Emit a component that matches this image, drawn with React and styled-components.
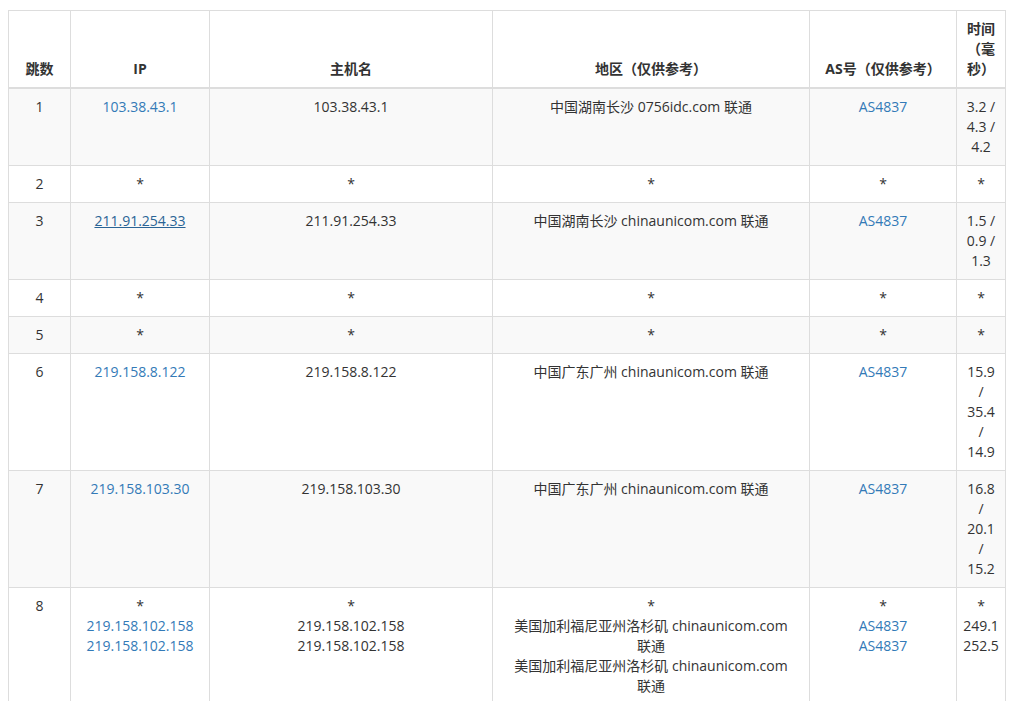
import React from "react";
import styled, { createGlobalStyle } from "styled-components";

const Global = createGlobalStyle`
  body { margin: 0; background: #fff; font-family: "Open Sans", "Noto Sans CJK SC", sans-serif; font-size: 14px; color: #333; }
`;

const Wrap = styled.div`
  padding: 10px 4px 0 8px;
`;

const Table = styled.table`
  width: 998px;
  border-collapse: collapse;
  table-layout: fixed;
  th, td {
    border: 1px solid #ddd;
    padding: 8px 6px;
    line-height: 20px;
    text-align: center;
  }
  th {
    font-weight: bold;
    vertical-align: bottom;
    border-bottom: 2px solid #ddd;
  }
  th:nth-child(1) { width: 41px; padding: 8px 10px; word-break: break-all; }
  th:nth-child(2) { width: 126px; }
  th:nth-child(3) { width: 270px; }
  th:nth-child(4) { width: 304px; }
  th:nth-child(5) { width: 134px; }
  td { vertical-align: top; }
  tbody tr:nth-child(odd) { background: #f9f9f9; }
`;

const A = styled.a`
  color: ${p => (p.$hover ? "#2a6496" : "#337ab7")};
  text-decoration: ${p => (p.$hover ? "underline" : "none")};
`;

const Lines = ({ items, link }) =>
  items.map((t, i) => (
    <div key={i}>{link && t !== "*" ? <A href="#">{t}</A> : t}</div>
  ));

const rows = [
  [["103.38.43.1"], ["103.38.43.1"], ["中国湖南长沙 0756idc.com 联通"], ["AS4837"], ["3.2 / 4.3 / 4.2"]],
  null,
  [["211.91.254.33"], ["211.91.254.33"], ["中国湖南长沙 chinaunicom.com 联通"], ["AS4837"], ["1.5 / 0.9 / 1.3"]],
  null,
  null,
  [["219.158.8.122"], ["219.158.8.122"], ["中国广东广州 chinaunicom.com 联通"], ["AS4837"], ["15.9 / 35.4 /", "14.9"]],
  [["219.158.103.30"], ["219.158.103.30"], ["中国广东广州 chinaunicom.com 联通"], ["AS4837"], ["16.8 / 20.1 /", "15.2"]],
  [
    ["*", "219.158.102.158", "219.158.102.158"],
    ["*", "219.158.102.158", "219.158.102.158"],
    ["*", "美国加利福尼亚州洛杉矶 chinaunicom.com", "联通", "美国加利福尼亚州洛杉矶 chinaunicom.com", "联通"],
    ["*", "AS4837", "AS4837"],
    ["*", "249.1", "252.5"],
  ],
  null,
  null,
  null,
  [
    ["154.19.185.122", "*", "*"],
    ["cvm-", "3jehjg725s225.us01.silicloud.com", "*", "*"],
    ["美国加利福尼亚州洛杉矶 cogentco.com", "*", "*"],
    ["AS149042 /", "AS174", "*", "*"],
    ["416.3", "*", "*"],
  ],
];

export default function App() {
  return (
    <Wrap>
      <Global />
      <Table>
        <thead>
          <tr>
            <th>跳数</th>
            <th>IP</th>
            <th>主机名</th>
            <th>地区（仅供参考）</th>
            <th>AS号（仅供参考）</th>
            <th>时间（毫秒）</th>
          </tr>
        </thead>
        <tbody>
          {rows.map((r, i) => {
            const d = r || [["*"], ["*"], ["*"], ["*"], ["*"]];
            return (
              <tr key={i}>
                <td>{i + 1}</td>
                <td>
                  {i === 2 ? (
                    <A href="#" $hover>211.91.254.33</A>
                  ) : (
                    <Lines items={d[0]} link />
                  )}
                </td>
                <td><Lines items={d[1]} /></td>
                <td><Lines items={d[2]} /></td>
                <td>
                  {i === 11 ? (
                    <>
                      <div><A href="#">AS149042</A> /</div>
                      <div><A href="#">AS174</A></div>
                      <div>*</div>
                      <div>*</div>
                    </>
                  ) : (
                    <Lines items={d[3]} link />
                  )}
                </td>
                <td><Lines items={d[4]} /></td>
              </tr>
            );
          })}
        </tbody>
      </Table>
    </Wrap>
  );
}
